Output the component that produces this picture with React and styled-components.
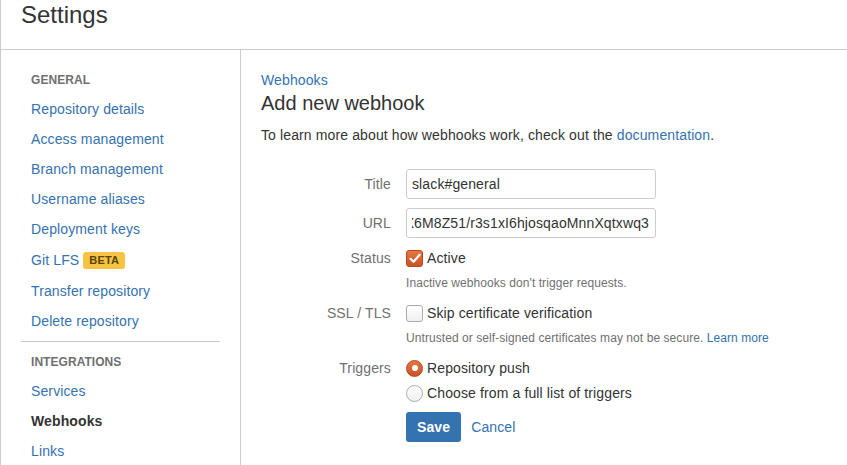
import React, { useEffect, useRef } from "react";
import styled, { createGlobalStyle } from "styled-components";

const Global = createGlobalStyle`
  html, body { margin: 0; padding: 0; background: #fff; }
  body { font-family: "Liberation Sans", Arial, sans-serif; font-size: 14px; color: #333; letter-spacing: 0.12px; }
  * { box-sizing: border-box; }
`;

const Page = styled.div`
  min-height: 100vh;
  border-left: 1px solid #ccc;
  display: flex;
  flex-direction: column;
`;

const Header = styled.header`
  height: 50px;
  border-bottom: 1px solid #ccc;
  padding-left: 20px;
`;

const Title = styled.h1`
  margin: 0;
  font-size: 24px;
  line-height: 30px;
  font-weight: normal;
  letter-spacing: 0;
  color: #333;
`;

const Body = styled.div`
  flex: 1;
  display: flex;
`;

const Sidebar = styled.nav`
  width: 240px;
  flex-shrink: 0;
  border-right: 1px solid #ccc;
  padding: 14px 20px 0 20px;
  display: flex;
  flex-direction: column;
`;

const NavHeading = styled.div`
  height: 30px;
  line-height: 32px;
  padding-left: 10px;
  font-size: 12px;
  font-weight: bold;
  letter-spacing: 0.05px;
  text-transform: uppercase;
  color: #707070;
`;

const NavItem = styled.a`
  display: flex;
  align-items: center;
  gap: 4px;
  height: ${(p) => (p.$tall ? "32px" : "30px")};
  padding-left: 10px;
  font-size: 14px;
  text-decoration: none;
  color: ${(p) => (p.$active ? "#333" : "#3572b0")};
  font-weight: ${(p) => (p.$active ? "bold" : "normal")};
`;

const Badge = styled.span`
  display: inline-flex;
  align-items: center;
  height: 17px;
  padding: 0 6px;
  background: #f6c342;
  color: #594300;
  border-radius: 3px;
  font-size: 11px;
  font-weight: bold;
  letter-spacing: 0.2px;
`;

const Divider = styled.hr`
  border: 0;
  border-top: 1px solid #ccc;
  margin: 5px 0 4px;
`;

const Main = styled.main`
  flex: 1;
  padding: 20px 20px 0 20px;
`;

const Link = styled.a`
  color: #3572b0;
  text-decoration: none;
`;

const Crumb = styled.div`
  line-height: 20px;
`;

const Heading = styled.h2`
  margin: 0;
  font-size: 20px;
  line-height: 26px;
  font-weight: normal;
  letter-spacing: 0;
  color: #333;
`;

const Intro = styled.p`
  margin: 9px 0 0;
  line-height: 20px;
`;

const Form = styled.form`
  display: flex;
  flex-direction: column;
  margin-top: 24px;
`;

const Row = styled.div`
  display: grid;
  grid-template-columns: 130px 1fr;
  column-gap: 15px;
  margin-top: ${(p) => p.$mt || 0}px;
`;

const Label = styled.label`
  text-align: right;
  color: #707070;
  line-height: ${(p) => (p.$input ? "30px" : "20px")};
`;

const Field = styled.div`
  display: flex;
  flex-direction: column;
  gap: ${(p) => p.$gap || 0}px;
`;

const TextInput = styled.input`
  width: 250px;
  height: 30px;
  border: 1px solid #ccc;
  border-radius: 3px;
  padding: 0 6px 0 5px;
  font-family: inherit;
  font-size: 14px;
  letter-spacing: 0.12px;
  color: #333;
  outline: none;
`;

const Choice = styled.label`
  display: flex;
  align-items: center;
  gap: 4px;
  height: 20px;
  color: #333;
`;

const Box = styled.span`
  width: 17px;
  height: 17px;
  border-radius: ${(p) => (p.$round ? "50%" : "3px")};
  display: inline-flex;
  align-items: center;
  justify-content: center;
  flex-shrink: 0;
  border: 1px solid ${(p) => (p.$on ? "#b24a1f" : "#aaa")};
  background: ${(p) =>
    p.$on
      ? "linear-gradient(#e6783f, #c9522a)"
      : "linear-gradient(#fff, #f0f0f0)"};
`;

const Dot = styled.span`
  width: 6px;
  height: 6px;
  border-radius: 50%;
  background: #fff;
`;

const Help = styled.div`
  margin-top: 5px;
  font-size: 12px;
  line-height: 20px;
  letter-spacing: 0.07px;
  color: #707070;
`;

const Actions = styled.div`
  display: flex;
  align-items: center;
  gap: 10px;
`;

const Button = styled.button`
  height: 30px;
  padding: 0 11px;
  border: 0;
  border-radius: 3px;
  background: #3572b0;
  color: #fff;
  font-family: inherit;
  font-size: 14px;
  font-weight: bold;
  letter-spacing: 0.12px;
`;

const Check = () => (
  <svg width="12" height="11" viewBox="0 0 12 11">
    <path d="M1.5 5.8 L4.6 8.8 L10.6 1.8" fill="none" stroke="#fff" strokeWidth="2.2" strokeLinecap="round" strokeLinejoin="round" />
  </svg>
);

export default function App() {
  const urlRef = useRef(null);
  useEffect(() => {
    const el = urlRef.current;
    if (el) el.scrollLeft = el.scrollWidth;
  }, []);

  return (
    <>
      <Global />
      <Page>
        <Header>
          <Title>Settings</Title>
        </Header>
        <Body>
          <Sidebar>
            <NavHeading>General</NavHeading>
            <NavItem href="#">Repository details</NavItem>
            <NavItem href="#">Access management</NavItem>
            <NavItem href="#">Branch management</NavItem>
            <NavItem href="#">Username aliases</NavItem>
            <NavItem href="#">Deployment keys</NavItem>
            <NavItem href="#" $tall>
              Git LFS <Badge>BETA</Badge>
            </NavItem>
            <NavItem href="#">Transfer repository</NavItem>
            <NavItem href="#">Delete repository</NavItem>
            <Divider />
            <NavHeading>Integrations</NavHeading>
            <NavItem href="#">Services</NavItem>
            <NavItem href="#" $active>Webhooks</NavItem>
            <NavItem href="#">Links</NavItem>
          </Sidebar>
          <Main>
            <Crumb><Link href="#">Webhooks</Link></Crumb>
            <Heading>Add new webhook</Heading>
            <Intro>
              To learn more about how webhooks work, check out the <Link href="#">documentation</Link>.
            </Intro>
            <Form onSubmit={(e) => e.preventDefault()}>
              <Row>
                <Label $input>Title</Label>
                <Field><TextInput defaultValue="slack#general" /></Field>
              </Row>
              <Row $mt={9}>
                <Label $input>URL</Label>
                <Field>
                  <TextInput
                    ref={urlRef}
                    defaultValue="https://hooks.slack.com/services/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"
                  />
                </Field>
              </Row>
              <Row $mt={10}>
                <Label>Status</Label>
                <Field>
                  <Choice><Box $on><Check /></Box>Active</Choice>
                  <Help>Inactive webhooks don't trigger requests.</Help>
                </Field>
              </Row>
              <Row $mt={10}>
                <Label>SSL / TLS</Label>
                <Field>
                  <Choice><Box />Skip certificate verification</Choice>
                  <Help>
                    Untrusted or self-signed certificates may not be secure. <Link href="#">Learn more</Link>
                  </Help>
                </Field>
              </Row>
              <Row $mt={10}>
                <Label>Triggers</Label>
                <Field $gap={5}>
                  <Choice><Box $round $on><Dot /></Box>Repository push</Choice>
                  <Choice><Box $round />Choose from a full list of triggers</Choice>
                </Field>
              </Row>
              <Row $mt={9}>
                <span />
                <Actions>
                  <Button type="submit">Save</Button>
                  <Link href="#">Cancel</Link>
                </Actions>
              </Row>
            </Form>
          </Main>
        </Body>
      </Page>
    </>
  );
}
